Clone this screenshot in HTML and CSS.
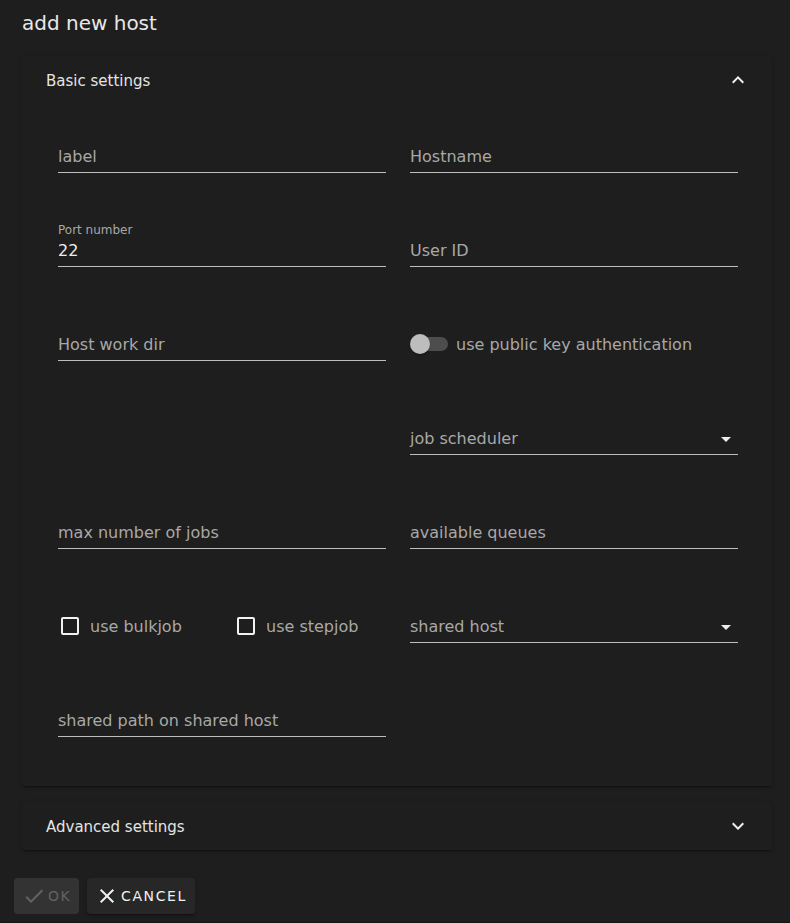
FILE: index.html
```html
<!DOCTYPE html>
<html lang="en">
<head>
<meta charset="utf-8">
<title>add new host</title>
<link rel="stylesheet" href="styles.css">
</head>
<body>
<div class="dialog">
  <div class="title">add new host</div>
  <div class="panels">
    <section class="panel">
      <div class="panel-header">
        <span>Basic settings</span>
        <svg class="icon" viewBox="0 0 24 24"><path d="M7.41,15.41L12,10.83L16.59,15.41L18,14L12,8L6,14L7.41,15.41Z"/></svg>
      </div>
      <div class="panel-content">
        <div class="cell"><div class="slot field"><span class="ph">label</span></div></div>
        <div class="cell"><div class="slot field"><span class="ph">Hostname</span></div></div>

        <div class="cell"><div class="slot field filled"><span class="float-label">Port number</span><span class="value">22</span></div></div>
        <div class="cell"><div class="slot field"><span class="ph">User ID</span></div></div>

        <div class="cell"><div class="slot field"><span class="ph">Host work dir</span></div></div>
        <div class="cell">
          <div class="slot">
            <span class="switch"><span class="track"></span><span class="thumb"></span></span>
            <span class="ph">use public key authentication</span>
          </div>
        </div>

        <div class="cell"></div>
        <div class="cell">
          <div class="slot field select"><span class="ph">job scheduler</span>
            <svg class="icon arrow" viewBox="0 0 24 24"><path d="M7,10L12,15L17,10H7Z"/></svg>
          </div>
        </div>

        <div class="cell"><div class="slot field"><span class="ph">max number of jobs</span></div></div>
        <div class="cell"><div class="slot field"><span class="ph">available queues</span></div></div>

        <div class="cell">
          <div class="slot checks">
            <label class="check">
              <svg class="icon box" viewBox="0 0 24 24"><path d="M19,3H5C3.89,3 3,3.89 3,5V19A2,2 0 0,0 5,21H19A2,2 0 0,0 21,19V5C21,3.89 20.1,3 19,3M19,5V19H5V5H19Z"/></svg>
              <span class="ph">use bulkjob</span>
            </label>
            <label class="check">
              <svg class="icon box" viewBox="0 0 24 24"><path d="M19,3H5C3.89,3 3,3.89 3,5V19A2,2 0 0,0 5,21H19A2,2 0 0,0 21,19V5C21,3.89 20.1,3 19,3M19,5V19H5V5H19Z"/></svg>
              <span class="ph">use stepjob</span>
            </label>
          </div>
        </div>
        <div class="cell">
          <div class="slot field select"><span class="ph">shared host</span>
            <svg class="icon arrow" viewBox="0 0 24 24"><path d="M7,10L12,15L17,10H7Z"/></svg>
          </div>
        </div>

        <div class="cell"><div class="slot field"><span class="ph">shared path on shared host</span></div></div>
        <div class="cell"></div>
      </div>
    </section>
    <section class="panel panel-closed">
      <div class="panel-header">
        <span>Advanced settings</span>
        <svg class="icon" viewBox="0 0 24 24"><path d="M7.41,8.58L12,13.17L16.59,8.58L18,10L12,16L6,10L7.41,8.58Z"/></svg>
      </div>
    </section>
  </div>
  <div class="actions">
    <button class="btn btn-disabled" disabled>
      <svg class="icon" viewBox="0 0 24 24"><path d="M21,7L9,19L3.5,13.5L4.91,12.09L9,16.17L19.59,5.59L21,7Z"/></svg>
      <span>OK</span>
    </button>
    <button class="btn btn-cancel">
      <svg class="icon" viewBox="0 0 24 24"><path d="M19,6.41L17.59,5L12,10.59L6.41,5L5,6.41L10.59,12L5,17.59L6.41,19L12,13.41L17.59,19L19,17.59L13.41,12L19,6.41Z"/></svg>
      <span>CANCEL</span>
    </button>
  </div>
</div>
</body>
</html>
```
FILE: styles.css
```css
html, body {
  margin: 0;
  padding: 0;
  background: #131313;
}
body {
  font-family: "DejaVu Sans", "Noto Sans CJK JP", sans-serif;
  color: #e0e0e0;
}
.dialog {
  background: #1e1e1e;
  height: 922px;
  overflow: hidden;
}
.title {
  padding: 8px 22px 0;
  font-size: 20px;
  line-height: 30px;
  color: #e8e8e8;
}
.panels {
  margin: 18px 18px 0 22px;
}
.panel {
  background: #1e1e1e;
  border-radius: 4px;
  box-shadow: 0 3px 1px -2px rgba(0,0,0,.2), 0 2px 2px 0 rgba(0,0,0,.14), 0 1px 5px 0 rgba(0,0,0,.12);
}
.panel-closed {
  margin-top: 16px;
}
.panel-header {
  box-sizing: border-box;
  height: 48px;
  padding: 2px 22px 0 24px;
  display: flex;
  align-items: center;
  justify-content: space-between;
  font-size: 15px;
  color: #e4e4e4;
}
.icon {
  width: 24px;
  height: 24px;
  fill: currentColor;
  flex: none;
}
.panel-header .icon {
  margin-top: -2px;
  color: #f0f0f0;
}
.panel-content {
  display: grid;
  grid-template-columns: 328px 328px;
  column-gap: 24px;
  padding: 0 0 24px 36px;
}
.cell {
  height: 94px;
  box-sizing: border-box;
  padding-top: 36px;
}
.slot {
  position: relative;
  box-sizing: border-box;
  height: 32px;
  padding-top: 2px;
  display: flex;
  align-items: center;
  font-size: 16px;
  line-height: 30px;
}
.field {
  height: 33px;
  border-bottom: 1px solid #bdbdbd;
}
.ph {
  color: #a8a8a8;
  white-space: nowrap;
}
.value {
  color: #ececec;
}
.float-label {
  position: absolute;
  left: 0;
  top: -11px;
  font-size: 12px;
  line-height: 14px;
  color: #a8a8a8;
}
.select .ph {
  flex: 1;
}
.arrow {
  color: #eeeeee;
  margin-top: 0;
}
.switch {
  position: relative;
  width: 38px;
  height: 24px;
  margin: -2px 8px 0 0;
  flex: none;
}
.track {
  position: absolute;
  left: 2px;
  top: 5px;
  width: 36px;
  height: 14px;
  border-radius: 7px;
  background: #4d4d4d;
}
.thumb {
  position: absolute;
  left: 0;
  top: 2px;
  width: 20px;
  height: 20px;
  border-radius: 50%;
  background: #bdbdbd;
  box-shadow: 0 2px 2px rgba(0,0,0,.2);
}
.checks {
  display: flex;
}
.check {
  display: flex;
  align-items: center;
  width: 176px;
  flex: none;
}
.check .box {
  color: #f2f2f2;
  margin: -2px 8px 0 0;
}
.actions {
  display: flex;
  gap: 8px;
  margin: 28px 0 0 14px;
}
.btn {
  box-sizing: border-box;
  height: 36px;
  border: 0;
  border-radius: 4px;
  display: flex;
  align-items: center;
  gap: 2px;
  font-family: "DejaVu Sans", "Noto Sans CJK JP", sans-serif;
  font-size: 14px;
  letter-spacing: 1.6px;
  text-transform: uppercase;
  cursor: pointer;
}
.btn-disabled {
  padding: 0 8px 0 8px;
  width: 65px;
  background: #333333;
  color: #636363;
}
.btn-cancel {
  padding: 0 8px 0 8px;
  width: 108px;
  background: #272727;
  color: #f0f0f0;
  box-shadow: 0 3px 1px -2px rgba(0,0,0,.2), 0 2px 2px 0 rgba(0,0,0,.14), 0 1px 5px 0 rgba(0,0,0,.12);
}
```
